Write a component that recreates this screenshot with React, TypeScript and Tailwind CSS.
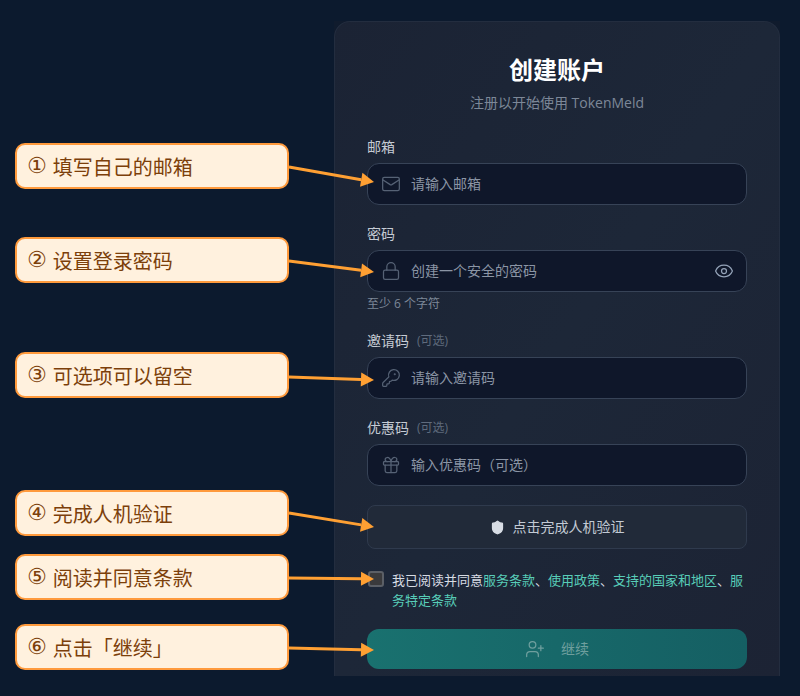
import { Eye, Gift, KeyRound, Lock, Mail, ShieldIcon, UserPlus } from 'lucide-react';
import type { ReactNode } from 'react';

const font = "font-['Open_Sans','Noto_Sans_CJK_SC',sans-serif]";

const callouts = [
  { num: '①', text: '填写自己的邮箱', className: 'mt-[143px]' },
  { num: '②', text: '设置登录密码', className: 'mt-[48px]' },
  { num: '③', text: '可选项可以留空', className: 'mt-[69px]' },
  { num: '④', text: '完成人机验证', className: 'mt-[92px]' },
  { num: '⑤', text: '阅读并同意条款', className: 'mt-[18px]' },
  { num: '⑥', text: '点击「继续」', className: 'mt-[24px]' },
];

const arrows = [
  [289, 167, 374, 182],
  [289, 261, 374, 272],
  [289, 377, 374, 380],
  [289, 513, 374, 527],
  [289, 578, 374, 579],
  [289, 648, 374, 650],
];

function Arrow({ line }: { line: number[] }) {
  const [x1, y1, x2, y2] = line;
  const a = Math.atan2(y2 - y1, x2 - x1);
  const back = 13;
  const side = 7;
  const bx = x2 - back * Math.cos(a);
  const by = y2 - back * Math.sin(a);
  const pts = [
    `${x2},${y2}`,
    `${bx - side * Math.sin(a)},${by + side * Math.cos(a)}`,
    `${bx + side * Math.sin(a)},${by - side * Math.cos(a)}`,
  ].join(' ');
  return (
    <g>
      <line x1={x1} y1={y1} x2={bx} y2={by} stroke="#ffa033" strokeWidth="3" />
      <polygon points={pts} fill="#ffa033" />
    </g>
  );
}

function Field({ label, optional, icon, placeholder, right }: {
  label: string;
  optional?: boolean;
  icon: ReactNode;
  placeholder: string;
  right?: ReactNode;
}) {
  return (
    <div>
      <div className="flex items-center gap-2 h-5 mb-[6px] text-sm text-[#c5cbd4]">
        <span>{label}</span>
        {optional && <span className="text-xs text-[#5f6b7d]">(可选)</span>}
      </div>
      <div className="flex items-center h-[42px] pl-[13px] pr-[12px] rounded-xl border border-[#374357] bg-[#0f172a]">
        <span className="w-5 h-5 text-[#566275]">{icon}</span>
        <span className="ml-[10px] flex-1 text-sm text-[#8b95a5]">{placeholder}</span>
        {right}
      </div>
    </div>
  );
}

export default function App() {
  return (
    <div className={`${font} relative flex w-[800px] h-[696px] overflow-hidden bg-[#0c1a2e]`}>
      <div className="w-[334px] shrink-0 pl-[15px] flex flex-col">
        {callouts.map((c) => (
          <div
            key={c.text}
            className={`${c.className} w-[274px] h-[46px] shrink-0 flex items-center gap-[6px] pl-[10px] pt-[3px] rounded-[10px] border-2 border-[#ff9a3c] bg-[#fff1de] text-[20px] text-[#7c3f0a]`}
          >
            <span className="font-['DejaVu_Sans',sans-serif] text-[22px] leading-7 -mt-[3px]">{c.num}</span>
            <span>{c.text}</span>
          </div>
        ))}
      </div>

      <div className="mt-[21px] w-[446px] h-[655px] bg-[#101b2d]">
        <div className="h-full rounded-t-2xl border-t border-x border-[#232d3f] bg-gradient-to-br from-[#1b2334] via-[#1d2738] to-[#1c2334] px-8 pt-[32px]">
          <h1 className="text-center text-2xl leading-8 font-bold text-white">创建账户</h1>
          <p className="mt-[5px] text-center text-sm leading-6 text-[#7d8898]">注册以开始使用 TokenMeld</p>

          <div className="mt-[22px]">
            <Field label="邮箱" icon={<Mail size={20} strokeWidth={1.5} />} placeholder="请输入邮箱" />
          </div>
          <div className="mt-[19px]">
            <Field
              label="密码"
              icon={<Lock size={20} strokeWidth={1.5} />}
              placeholder="创建一个安全的密码"
              right={<Eye size={20} strokeWidth={1.5} className="text-[#94a3b8]" />}
            />
            <p className="mt-[4px] text-xs leading-4 text-[#7d8898]">至少 6 个字符</p>
          </div>
          <div className="mt-[19px]">
            <Field label="邀请码" optional icon={<KeyRound size={20} strokeWidth={1.5} />} placeholder="请输入邀请码" />
          </div>
          <div className="mt-[19px]">
            <Field label="优惠码" optional icon={<Gift size={20} strokeWidth={1.5} />} placeholder="输入优惠码（可选）" />
          </div>

          <div className="mt-[19px] h-[44px] flex items-center justify-center gap-2 rounded-lg border border-[#2f3a4d] bg-[#212a39] text-sm text-[#c3cad5]">
            <ShieldIcon size={15} fill="#d8dde5" stroke="#d8dde5" />
            <span>点击完成人机验证</span>
          </div>

          <div className="mt-[22px] flex gap-[8px] pl-[1px]">
            <span className="w-4 h-4 shrink-0 rounded-[3px] border-2 border-[#5b5f66] bg-[#3a3a3c]" />
            <p className="-mt-[1px] text-[13px] leading-[20px] text-[#d6dbe3]">
              我已阅读并同意<span className="text-[#58cdb8]">服务条款</span>、<span className="text-[#58cdb8]">使用政策</span>、<span className="text-[#58cdb8]">支持的国家和地区</span>、<span className="text-[#58cdb8]">服务特定条款</span>
            </p>
          </div>

          <div className="mt-[19px] h-[40px] flex items-center justify-center gap-4 rounded-xl bg-gradient-to-r from-[#19716f] to-[#155f63] text-sm text-[#6f9f9e]">
            <UserPlus size={20} strokeWidth={1.5} />
            <span>继续</span>
          </div>
        </div>
      </div>

      <svg className="absolute inset-0 pointer-events-none" width="800" height="696">
        {arrows.map((l) => (
          <Arrow key={l[1]} line={l} />
        ))}
      </svg>
    </div>
  );
}
